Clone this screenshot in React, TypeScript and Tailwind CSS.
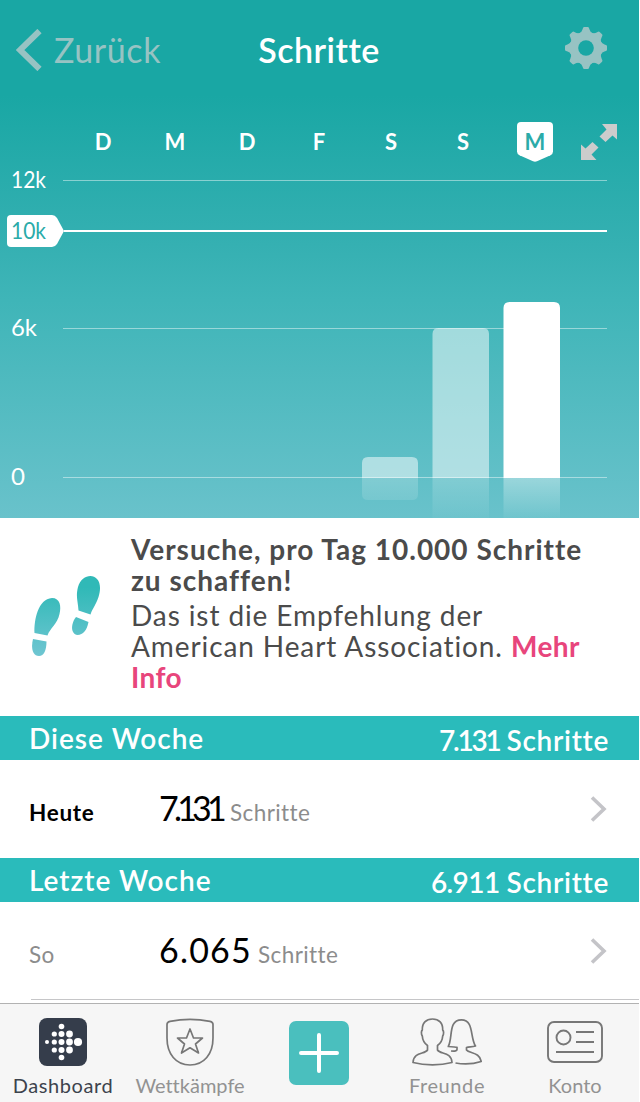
import React, { ReactNode } from 'react';

interface DayLabelProps {
  label: string;
  active?: boolean;
}
const DayLabel: React.FC<DayLabelProps> = ({ label, active = false }) => (
  <div className="relative flex h-10 items-center justify-center text-[22px] leading-none font-bold">
    {active && (
      <svg viewBox="0 0 36 40" className="absolute top-0 left-[18px] h-10 w-9" fill="#fff">
        <path d="M4 0H32Q36 0 36 4V29.500Q36 32 33.500 33.200L20 39.300Q18 40.200 16 39.300L2.500 33.200Q0 32 0 29.500V4Q0 0 4 0Z" />
      </svg>
    )}
    <span className={`relative pb-px ${active ? 'text-[#2aaba9]' : ''}`}>{label}</span>
  </div>
);

const GearIcon = () => (
  <svg viewBox="-21 -21 42 42" className="h-[42px] w-[42px]" fill="#97c3c3">
    <defs>
      <mask id="gear-hole">
        <rect x="-21" y="-21" width="42" height="42" fill="#fff" />
        <circle r="7.800" fill="#000" />
      </mask>
    </defs>
    <g mask="url(#gear-hole)">
      <circle r="16.300" />
      {[0, 45, 90, 135, 180, 225, 270, 315].map((angle) => (
        <path
          key={angle}
          transform={`rotate(${angle})`}
          d="M-7 -14.500Q-4 -16 -3.300 -19L-3 -20Q-2.700 -21 -1.700 -21H1.700Q2.700 -21 3 -20L3.300 -19Q4 -16 7 -14.500Z"
        />
      ))}
    </g>
  </svg>
);

const ExpandIcon = () => (
  <svg viewBox="0 0 36 36" className="h-9 w-9" fill="#ccc">
    <path d="M21 0H36V15.500L31.500 11.500L24.500 18L18.500 12.500L25.500 5.500Z" />
    <path d="M15.500 36H0V20.500L4.500 24.500L11.500 18L17.500 23.500L10.500 30.500Z" />
  </svg>
);

const gridLines = [
  { label: '12k', y: 15.5, width: 35 },
  { label: '6k', y: 163.5, width: 26 },
  { label: '0', y: 312, width: 14 },
];

const StepsChart = () => (
  <svg viewBox="0 0 639 353" className="block h-[353px] w-[639px]">
    <defs>
      <linearGradient id="reflection" x1="0" y1="0" x2="0" y2="1">
        <stop offset="0" stopColor="#fff" stopOpacity=".36" />
        <stop offset="1" stopColor="#fff" stopOpacity=".04" />
      </linearGradient>
      <linearGradient id="small-reflection" x1="0" y1="0" x2="0" y2="1">
        <stop offset="0" stopColor="#fff" stopOpacity=".2" />
        <stop offset="1" stopColor="#fff" stopOpacity=".11" />
      </linearGradient>
      <linearGradient id="faded-reflection" x1="0" y1="0" x2="0" y2="1">
        <stop offset="0" stopColor="#fff" stopOpacity=".2" />
        <stop offset="1" stopColor="#fff" stopOpacity=".03" />
      </linearGradient>
    </defs>
    {gridLines.map(({ label, y, width }) => (
      <g key={label}>
        <text x="11" y={y + 7.5} textLength={width} lengthAdjust="spacingAndGlyphs" fontSize="22.500" fill="#fff">
          {label}
        </text>
        <path d={`M63 ${Math.floor(y) + 0.5}H607`} stroke="#fff" strokeOpacity=".45" />
      </g>
    ))}
    <path d="M11 50H52Q55 50 57 53L64 66L57 79Q55 82 52 82H11Q7 82 7 78V54Q7 50 11 50Z" fill="#fff" />
    <path d="M64 66H607" stroke="#fff" strokeWidth="2" />
    <text x="11" y="73.500" textLength="35" lengthAdjust="spacingAndGlyphs" fontSize="22.500" fill="#2aaba9">
      10k
    </text>
    <path d="M362 313V298Q362 292 368 292H412Q418 292 418 298V313Z" fill="#fff" fillOpacity=".5" />
    <path d="M362 313V329Q362 335 368 335H412Q418 335 418 329V313Z" fill="url(#small-reflection)" />
    <path d="M432.500 313V169Q432.500 163 438.500 163H483Q489 163 489 169V313Z" fill="#fff" fillOpacity=".5" />
    <path d="M432.500 313H489V353H432.500Z" fill="url(#faded-reflection)" />
    <path d="M503.500 313V143Q503.500 137 509.500 137H554Q560 137 560 143V313Z" fill="#fff" />
    <path d="M503.500 313H560V353H503.500Z" fill="url(#reflection)" />
  </svg>
);

const FootstepsIcon = () => (
  <svg viewBox="0 0 70 82" className="h-[82px] w-[70px]" fill="url(#steps)">
    <defs>
      <linearGradient id="steps" gradientUnits="userSpaceOnUse" x1="0" y1="0" x2="0" y2="82">
        <stop offset=".15" stopColor="#30b9b7" />
        <stop offset="1" stopColor="#70c6d2" />
      </linearGradient>
    </defs>
    <path d="M2.500 58C2 45 6 24 20 23C28 23 29.500 31 27.500 39C25.500 49 18 53 15.500 60.500Z" />
    <path d="M1 64L14.500 66.500C14.500 75 12 81 7 81C0 81 -1 72 1 64Z" />
    <path d="M46.500 35.500C46 26 43.500 22 46 12C49 1 60 -2 65 4C69 8 68.500 16 66.500 22C64 30 60 34 58.500 39.500Z" />
    <path d="M44 42L56.500 47C55 55 51 60 45.500 60C38 59 39 48 44 42Z" />
  </svg>
);

interface WeekHeaderProps {
  title: string;
  value: string;
  valueClass: string;
}
const WeekHeader: React.FC<WeekHeaderProps> = ({ title, value, valueClass }) => (
  <div className="flex h-11 w-[639px] shrink-0 justify-between bg-[#2abbbb] pr-[30px] pl-[29px] text-[28px] leading-[44px] font-semibold tracking-[1px] whitespace-nowrap text-white">
    <span>{title}</span>
    <span className="flex pt-0.5">
      <span className={valueClass}>{value}</span>
      <span className="ml-[7px] tracking-[0.7px]">Schritte</span>
    </span>
  </div>
);

interface StepRowProps {
  day: ReactNode;
  value: string;
  valueClass: string;
}
const StepRow: React.FC<StepRowProps> = ({ day, value, valueClass }) => (
  <div className="flex h-[98px] w-[639px] shrink-0 items-center pr-8 pl-[29px] whitespace-nowrap">
    <div className="flex flex-1 items-baseline pb-1 text-[22.500px] tracking-[0.4px] text-[#8c8c8c]">
      <span className="w-[130px]">{day}</span>
      <span className={`text-[34px] text-black ${valueClass}`}>{value}</span>
      <span>Schritte</span>
    </div>
    <svg viewBox="0 0 17 26" className="h-[26px] w-[17px]" fill="none" stroke="#c4c4c8" strokeWidth="3.600">
      <path d="M2 1.500L14 13L2 24.500" />
    </svg>
  </div>
);

const DashboardIcon = () => (
  <svg viewBox="0 0 48 48" className="h-12 w-12">
    <rect width="48" height="48" rx="8" fill="#353d4b" />
    <g fill="#fff">
      <circle cx="8" cy="24" r="2" />
      {[16, 24, 32].map((y) => (
        <g key={y}>
          <circle cx="15.300" cy={y} r="2.600" />
          <circle cx="22.500" cy={y} r="3" />
          <circle cx="30.500" cy={y} r="3.400" />
        </g>
      ))}
      <circle cx="22.500" cy="8.500" r="2.800" />
      <circle cx="22.500" cy="39.500" r="2.800" />
      <circle cx="39" cy="24" r="4.100" />
    </g>
  </svg>
);

const ShieldIcon = () => (
  <svg viewBox="0 0 48 48" className="h-12 w-12" fill="none" stroke="#777" strokeWidth="1.700" strokeLinejoin="round">
    <path d="M1 6.500Q1 4 4 3.300Q24 -.7 44 3.300Q47 4 47 6.500V20C47 36 38 47 24 47S1 36 1 20Z" />
    <path d="M24 11L27.500 20H36.500L29.500 26L32.500 35L24 29.800L15.500 35L18.500 26L11.500 20H20.500Z" />
  </svg>
);

const FriendsIcon = () => (
  <svg viewBox="0 0 70 48" className="h-12 w-[70px]" fill="none" stroke="#777" strokeWidth="1.700" strokeLinejoin="round">
    <path d="M15.500 27.500C12 25 10.500 21.500 10.300 18C9 16 9.200 13 10.300 12C10 5 14 1 20.500 1S31 5 30.700 12C31.800 13 32 16 30.700 18C30.500 21.500 29 25 25.500 27.500V32C28 36.500 39.500 33.500 40 44.500Q31 46.800 20.500 46.800T1 44.500C1.500 33.500 13 36.500 15.500 32Z" />
    <path d="M39 33Q45 33.500 45 31.500V29.300C42 29 39 28.500 36.300 28.500C41 20 36 1.800 49.500 1.800C62 1.800 58 20 63.500 28C60 29.300 57 28.500 54.500 29.500V32C57 35.500 68 34 69.200 43.500Q57 47.500 43.500 45" />
  </svg>
);

const AccountIcon = () => (
  <svg viewBox="0 0 56 42" className="h-[42px] w-14" fill="none" stroke="#777" strokeWidth="1.900">
    <rect x="1" y="1" width="54" height="40" rx="6" />
    <circle cx="16.500" cy="16.500" r="7" />
    <path d="M29 11H47M29 21H47M9 31H47" />
  </svg>
);

interface TabProps {
  label: string;
  children: ReactNode;
  className?: string;
}
const Tab: React.FC<TabProps> = ({ label, children, className = 'text-[#929292]' }) => (
  <div className={`flex flex-col items-center text-[20px] leading-6 whitespace-nowrap ${className}`}>
    <div className="flex h-[76px] items-center">{children}</div>
    <span className="-mt-[7px]">{label}</span>
  </div>
);

export default function App() {
  return (
    <div className="flex h-[1102px] w-[640px] flex-col overflow-hidden bg-white font-['Lato','Open_Sans',sans-serif] [font-variant-ligatures:none]">
      <section className="h-[518px] w-[639px] shrink-0 bg-[linear-gradient(#19a7a4_0px,#19a7a4_95px,#35b0b2_245px,#3fb5b8_300px,#69c2cb_518px)] text-white">
        <header className="grid h-[122px] grid-cols-[200px_239px_200px] text-[34px] leading-[40px]">
          <div className="flex gap-3 pt-[29px] pl-4 text-[#97c3c3]">
            <svg viewBox="0 0 26 42" className="h-[42px] w-[26px]" fill="none" stroke="currentColor" strokeWidth="6">
              <path d="M23.500 2L4 21L23.500 40" />
            </svg>
            <span className="pt-px tracking-[0.6px]">Zurück</span>
          </div>
          <h1 className="pt-[30px] pr-px text-center font-semibold tracking-[0.5px]">Schritte</h1>
          <div className="flex justify-end pt-[27px] pr-8">
            <GearIcon />
          </div>
        </header>
        <div className="flex h-[43px] pl-[67px]">
          <div className="grid grid-cols-7 [&>*]:w-[72px]">
            <DayLabel label="D" />
            <DayLabel label="M" />
            <DayLabel label="D" />
            <DayLabel label="F" />
            <DayLabel label="S" />
            <DayLabel label="S" />
            <DayLabel label="M" active />
          </div>
          <div className="pt-0.5 pl-2.5">
            <ExpandIcon />
          </div>
        </div>
        <StepsChart />
      </section>

      <section className="flex h-[198px] shrink-0 text-[28px] leading-[31px] whitespace-nowrap text-[#4b4b4b]">
        <div className="w-[131px] pt-[57px] pl-8">
          <FootstepsIcon />
        </div>
        <div className="pt-[16px]">
          <h2 className="font-bold tracking-[1px]">
            Versuche, pro Tag 10.000 Schritte
            <br />
            zu schaffen!
          </h2>
          <p className="mt-1 tracking-[0.9px]">
            Das ist die Empfehlung der
            <br />
            American Heart Association. <span className="font-bold tracking-[0.4px] text-[#e8457c]">Mehr</span>
            <br />
            <span className="font-bold tracking-[0.4px] text-[#e8457c]">Info</span>
          </p>
        </div>
      </section>

      <WeekHeader title="Diese Woche" value="7.131" valueClass="tracking-[-2.2px]" />
      <StepRow day={<b className="tracking-[0.7px] text-black">Heute</b>} value="7.131" valueClass="w-[71px] tracking-[-4.8px]" />
      <WeekHeader title="Letzte Woche" value="6.911" valueClass="tracking-[-0.6px]" />
      <StepRow day="So" value="6.065" valueClass="w-[99px] tracking-[1.2px]" />
      <div className="mt-[-1px] ml-[31px] h-px w-[608px] shrink-0 bg-[#c6c6c8]" />

      <nav className="mt-[3px] grid h-[99px] w-[639px] shrink-0 grid-cols-[126px_128px_129px_128px_128px] border-t border-[#b2b2b2] bg-[#f6f6f6]">
        <Tab label="Dashboard" className="tracking-[0.6px] text-[#3d434d]">
          <DashboardIcon />
        </Tab>
        <Tab label="Wettkämpfe">
          <ShieldIcon />
        </Tab>
        <div className="flex justify-center pt-[17px]">
          <svg viewBox="0 0 60 64" className="h-16 w-[60px]">
            <rect width="60" height="64" rx="7" fill="#4abfbe" />
            <path d="M12 32H48M30 14V50" stroke="#fff" strokeWidth="4" strokeLinecap="round" />
          </svg>
        </div>
        <Tab label="Freunde" className="tracking-[0.6px] text-[#929292]">
          <FriendsIcon />
        </Tab>
        <Tab label="Konto">
          <AccountIcon />
        </Tab>
      </nav>
    </div>
  );
}
